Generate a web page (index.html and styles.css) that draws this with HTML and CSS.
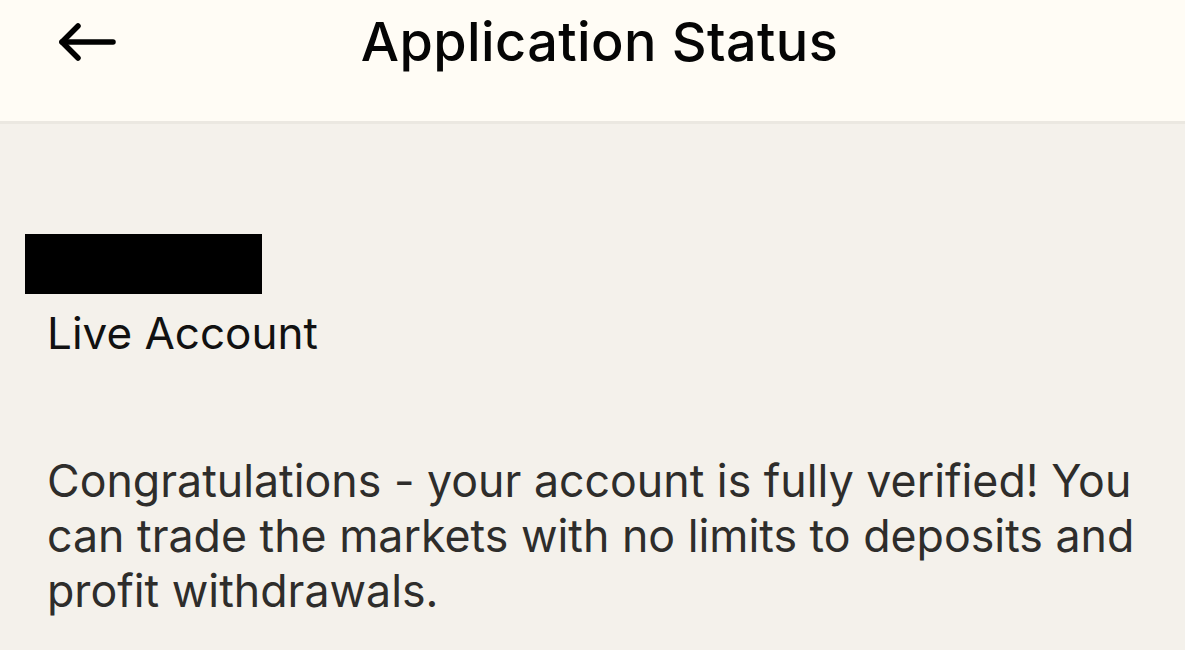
FILE: index.html
```html
<!DOCTYPE html>
<html>
<head>
<meta charset="utf-8">
<link rel="stylesheet" href="styles.css">
</head>
<body>
<header class="topbar">
  <button class="back" aria-label="Back">
    <svg width="60" height="44" viewBox="0 0 60 44" fill="none" stroke="#000" stroke-width="5.5" stroke-linecap="round" stroke-linejoin="round">
      <path d="M56 22H5"/>
      <path d="M21 6L5 22L21 38"/>
    </svg>
  </button>
  <h1 class="title">Application Status</h1>
</header>
<main class="content">
  <div class="redacted"></div>
  <div class="account">Live Account</div>
  <p class="message">Congratulations - your account is fully verified! You can trade the markets with no limits to deposits and profit withdrawals.</p>
</main>
</body>
</html>
```

FILE: styles.css
```css
html, body {
  margin: 0;
  padding: 0;
  background: #f4f1eb;
  font-family: Inter, "Noto Sans", "Liberation Sans", sans-serif;
}
.topbar {
  height: 121px;
  background: #fffcf5;
  border-bottom: 3px solid #ebe8e1;
  display: flex;
  align-items: center;
  justify-content: center;
  position: relative;
  box-sizing: content-box;
}
.back {
  position: absolute;
  left: 57px;
  top: 20px;
  background: none;
  border: 0;
  padding: 0;
  width: 60px;
  height: 44px;
}
.back svg { display: block; }
.title {
  margin: 0;
  margin-top: -38px;
  padding-left: 14px;
  font-size: 54px;
  font-weight: 500;
  color: #050505;
  letter-spacing: 0.4px;
}
.content {
  padding: 110px 20px 0 47px;
}
.redacted {
  width: 237px;
  height: 60px;
  background: #000;
  margin-left: -22px;
}
.account {
  margin-top: 12px;
  font-size: 44px;
  line-height: 54px;
  color: #111;
}
.message {
  margin: 94px 0 0;
  font-size: 44.7px;
  line-height: 55px;
  color: #2e2d2b;
}
```
